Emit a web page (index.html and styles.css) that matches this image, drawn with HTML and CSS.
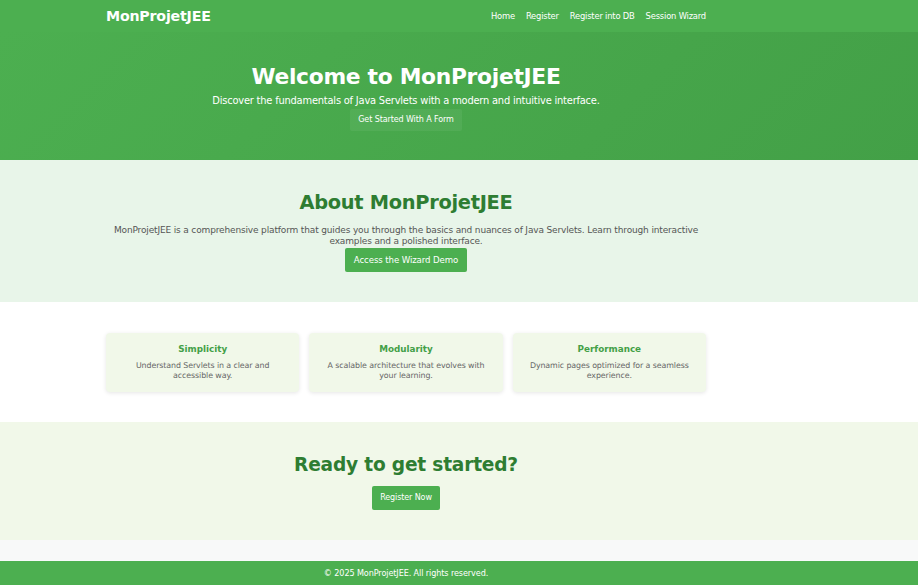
FILE: index.html
```html
<!DOCTYPE html>
<html lang="en">
<head>
<meta charset="utf-8">
<title>MonProjetJEE</title>
<link rel="stylesheet" href="styles.css">
</head>
<body>
<header class="navbar">
  <div class="container nav-inner">
    <div class="logo">MonProjetJEE</div>
    <nav class="nav-links">
      <a href="#">Home</a>
      <a href="#">Register</a>
      <a href="#">Register into DB</a>
      <a href="#">Session Wizard</a>
    </nav>
  </div>
</header>
<section class="hero">
  <div class="container center">
    <h1>Welcome to MonProjetJEE</h1>
    <p>Discover the fundamentals of Java Servlets with a modern and intuitive interface.</p>
    <a class="btn-ghost" href="#">Get Started With A Form</a>
  </div>
</section>
<section class="about">
  <div class="container center">
    <h2>About MonProjetJEE</h2>
    <p>MonProjetJEE is a comprehensive platform that guides you through the basics and nuances of Java Servlets. Learn through interactive examples and a polished interface.</p>
    <a class="btn" href="#">Access the Wizard Demo</a>
  </div>
</section>
<section class="features">
  <div class="container cards">
    <div class="card">
      <h3>Simplicity</h3>
      <p>Understand Servlets in a clear and accessible way.</p>
    </div>
    <div class="card">
      <h3>Modularity</h3>
      <p>A scalable architecture that evolves with your learning.</p>
    </div>
    <div class="card">
      <h3>Performance</h3>
      <p>Dynamic pages optimized for a seamless experience.</p>
    </div>
  </div>
</section>
<section class="cta">
  <div class="container center">
    <h2>Ready to get started?</h2>
    <a class="btn btn-sm" href="#">Register Now</a>
  </div>
</section>
<div class="spacer"></div>
<footer class="footer">
  <div class="container center">© 2025 MonProjetJEE. All rights reserved.</div>
</footer>
</body>
</html>
```
FILE: styles.css
```css
* { box-sizing: border-box; }
html, body { margin: 0; padding: 0; }
body {
  font-family: "DejaVu Sans", "Open Sans", sans-serif;
  background: #f8f9f9;
  color: #555;
}
a { text-decoration: none; }
.container { width: 600px; margin-left: 106px; }
.center { display: flex; flex-direction: column; align-items: center; text-align: center; }

.navbar { background: #4caf50; height: 32px; }
.nav-inner { height: 32px; display: flex; align-items: center; justify-content: space-between; }
.logo { color: #fff; font-weight: bold; font-size: 14.2px; letter-spacing: -0.2px; }
.nav-links { display: flex; gap: 11px; }
.nav-links a { color: #fff; font-size: 8.4px; letter-spacing: -0.2px; }

.hero {
  height: 128px;
  background: linear-gradient(135deg, #4caf50, #43a047);
  color: #fff;
  padding-top: 31px;
}
.hero h1 { margin: 0; font-size: 21.8px; font-weight: bold; line-height: 28px; letter-spacing: -0.3px; }
.hero p { margin: 3px 0 1px; font-size: 9.9px; line-height: 14px; letter-spacing: -0.2px; }
.btn-ghost {
  color: #fff; font-size: 8px; background: rgba(255,255,255,0.06);
  padding: 0 8px; height: 22px; line-height: 22px; border-radius: 2px; letter-spacing: -0.1px;
}

.about { background: #e8f5e9; height: 142px; padding-top: 29px; }
.about h2 { margin: 0; color: #2e7d32; font-size: 19.4px; line-height: 28px; font-weight: bold; letter-spacing: -0.3px; }
.about p { margin: 8px 0 0; font-size: 9px; line-height: 11px; color: #555; width: 600px; letter-spacing: -0.15px; }
.btn {
  background: #4caf50; color: #fff; font-size: 8.6px; letter-spacing: -0.1px;
  height: 24px; line-height: 24px; padding: 0 9px; border-radius: 2px;
}
.about .btn { margin-top: 1px; }

.features { background: #fff; height: 120px; padding-top: 31px; }
.cards { display: grid; grid-template-columns: repeat(3, 1fr); gap: 10px; }
.card {
  background: #f1f8e9; border-radius: 4px; height: 59px;
  box-shadow: 0 1px 4px rgba(0,0,0,0.1);
  text-align: center; padding: 10px 12px 0;
}
.card h3 { margin: 0; font-size: 8.8px; line-height: 12px; color: #43a047; font-weight: bold; }
.card p { margin: 6px 0 0; font-size: 7.9px; line-height: 10px; color: #666; letter-spacing: -0.1px; }

.cta { background: #f1f8e9; height: 118px; padding-top: 30px; }
.cta h2 { margin: 0; color: #2e7d32; font-size: 18.6px; line-height: 26px; font-weight: bold; letter-spacing: -0.2px; }
.btn-sm { margin-top: 8px; font-size: 8px; padding: 0 8px; }

.spacer { height: 21px; }
.footer { background: #4caf50; color: #fff; height: 24px; line-height: 24px; font-size: 8.1px; letter-spacing: -0.1px; }
```
